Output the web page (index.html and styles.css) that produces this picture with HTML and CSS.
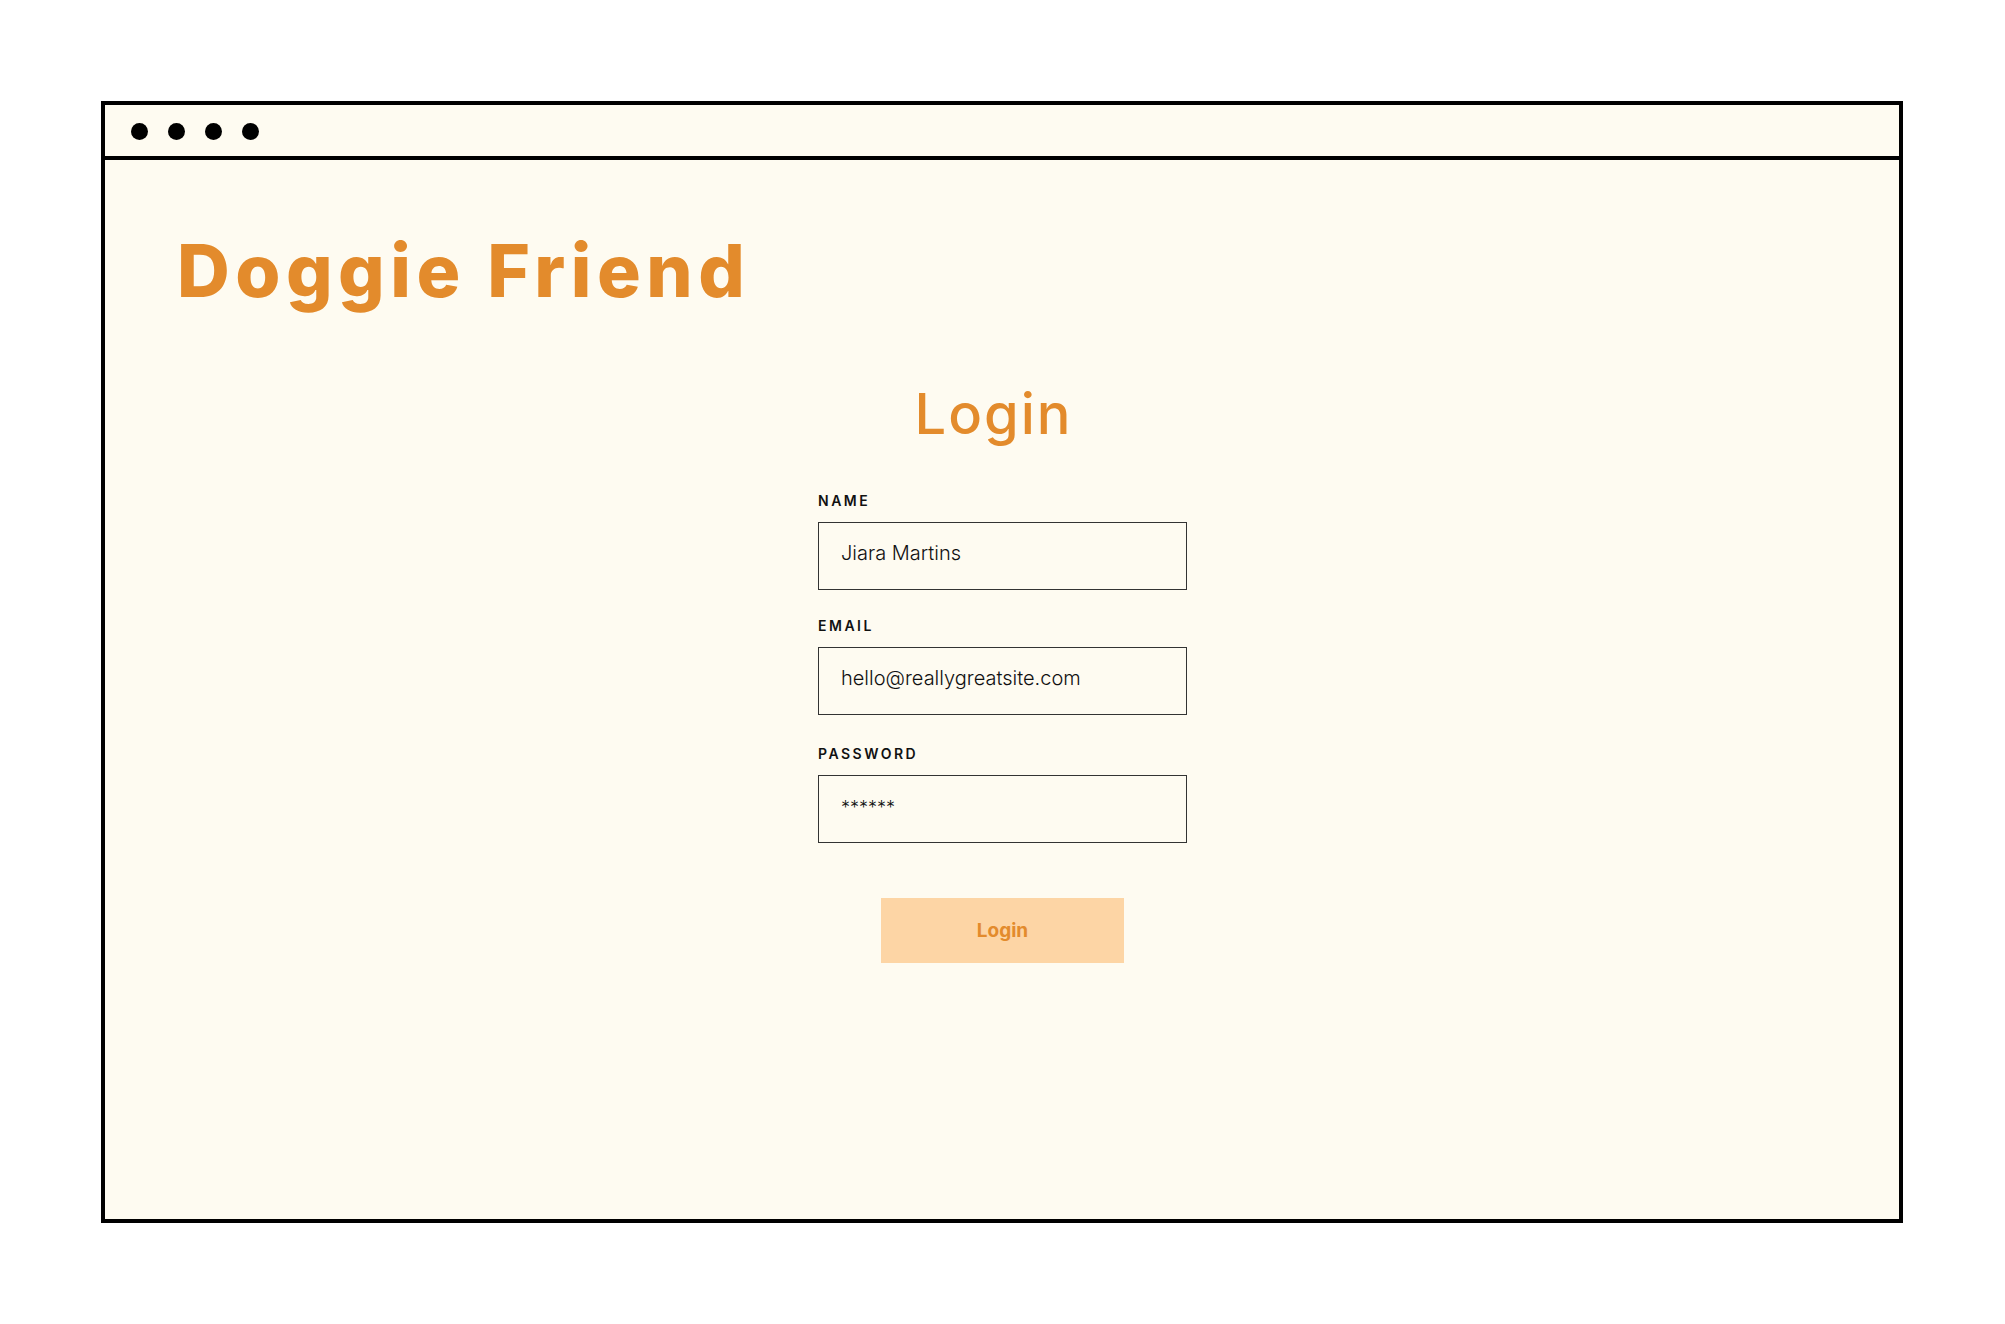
FILE: index.html
```html
<!DOCTYPE html>
<html lang="en">
<head>
<meta charset="utf-8">
<title>Doggie Friend – Login</title>
<link rel="stylesheet" href="styles.css">
</head>
<body>
<div class="window">
  <div class="titlebar">
    <span class="dot"></span><span class="dot"></span><span class="dot"></span><span class="dot"></span>
  </div>
  <div class="content">
    <h1 class="brand">Doggie Friend</h1>
    <form class="login">
      <h2 class="login-title">Login</h2>
      <label class="label label-first">NAME</label>
      <div class="field">Jiara Martins</div>
      <label class="label">EMAIL</label>
      <div class="field">hello@reallygreatsite.com</div>
      <label class="label label-pass">PASSWORD</label>
      <div class="field field-pass">******</div>
      <div class="actions"><button type="button" class="btn">Login</button></div>
    </form>
  </div>
</div>
</body>
</html>
```
FILE: styles.css
```css
* { box-sizing: border-box; }
html, body { margin: 0; padding: 0; background: #ffffff; }
body { padding: 101px 0 0 101px; font-family: "Inter", "Noto Sans", sans-serif; }

.window {
  width: 1802px;
  height: 1122px;
  border: 4px solid #000;
  background: #fefbf1;
  display: flex;
  flex-direction: column;
}
.titlebar {
  height: 55px;
  border-bottom: 4px solid #000;
  display: flex;
  align-items: center;
  gap: 20px;
  padding-left: 26px;
  padding-top: 2px;
}
.dot { width: 17px; height: 17px; border-radius: 50%; background: #000; }

.content { flex: 1; padding: 0 0 0 72px; }

.brand {
  margin: 74px 0 0 0;
  font-size: 73px;
  line-height: 73px;
  font-weight: 850;
  color: #e38b2c;
  letter-spacing: 5.5px;
}

.login {
  width: 369px;
  margin: 79px 0 0 641px;
  display: flex;
  flex-direction: column;
}
.login-title {
  margin: 0;
  text-align: center;
  font-size: 56px;
  line-height: 56px;
  font-weight: 500;
  color: #e38b2c;
  letter-spacing: 2px;
  padding-right: 18px;
}
.label {
  display: block;
  font-size: 14px;
  line-height: 14px;
  height: 14px;
  font-weight: 600;
  letter-spacing: 2.5px;
  color: #111;
  margin-top: 29px;
}
.label-first { margin-top: 52px; }
.label-pass { margin-top: 32px; }
.field {
  margin-top: 14px;
  height: 68px;
  border: 1.5px solid #333;
  padding: 18px 0 0 22px;
  font-size: 20px;
  line-height: 24px;
  font-weight: 300;
  color: #111;
}
.field-pass { font-size: 18px; padding-top: 20px; }
.actions { display: flex; justify-content: center; margin-top: 55px; }
.btn {
  width: 243px;
  height: 65px;
  border: 0;
  background: #fdd5a5;
  color: #e38b2c;
  font-family: "Inter", sans-serif;
  font-weight: 700;
  font-size: 19px;
}
```
